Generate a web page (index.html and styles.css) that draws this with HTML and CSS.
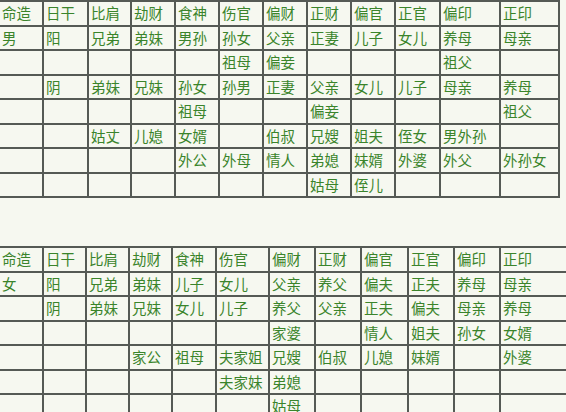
FILE: index.html
```html
<!DOCTYPE html>
<html lang="zh-CN">
<head>
<meta charset="utf-8">
<title>十神六亲</title>
<link rel="stylesheet" href="styles.css">
</head>
<body>
<table class="kin kin-male">
  <colgroup>
    <col class="c1"><col class="c2"><col class="c3"><col class="c4"><col class="c5"><col class="c6">
    <col class="c7"><col class="c8"><col class="c9"><col class="c10"><col class="c11"><col class="c12">
  </colgroup>
  <tr><td>命造</td><td>日干</td><td>比肩</td><td>劫财</td><td>食神</td><td>伤官</td><td>偏财</td><td>正财</td><td>偏官</td><td>正官</td><td>偏印</td><td>正印</td></tr>
  <tr><td>男</td><td>阳</td><td>兄弟</td><td>弟妹</td><td>男孙</td><td>孙女</td><td>父亲</td><td>正妻</td><td>儿子</td><td>女儿</td><td>养母</td><td>母亲</td></tr>
  <tr><td></td><td></td><td></td><td></td><td></td><td>祖母</td><td>偏妾</td><td></td><td></td><td></td><td>祖父</td><td></td></tr>
  <tr><td></td><td>阴</td><td>弟妹</td><td>兄妹</td><td>孙女</td><td>孙男</td><td>正妻</td><td>父亲</td><td>女儿</td><td>儿子</td><td>母亲</td><td>养母</td></tr>
  <tr><td></td><td></td><td></td><td></td><td>祖母</td><td></td><td></td><td>偏妾</td><td></td><td></td><td></td><td>祖父</td></tr>
  <tr><td></td><td></td><td>姑丈</td><td>儿媳</td><td>女婿</td><td></td><td>伯叔</td><td>兄嫂</td><td>姐夫</td><td>侄女</td><td>男外孙</td><td></td></tr>
  <tr><td></td><td></td><td></td><td></td><td>外公</td><td>外母</td><td>情人</td><td>弟媳</td><td>妹婿</td><td>外婆</td><td>外父</td><td>外孙女</td></tr>
  <tr><td></td><td></td><td></td><td></td><td></td><td></td><td></td><td>姑母</td><td>侄儿</td><td></td><td></td><td></td></tr>
</table>

<table class="kin kin-female">
  <colgroup>
    <col class="c1"><col class="c2"><col class="c3"><col class="c4"><col class="c5"><col class="c6">
    <col class="c7"><col class="c8"><col class="c9"><col class="c10"><col class="c11"><col class="c12">
  </colgroup>
  <tr><td>命造</td><td>日干</td><td>比肩</td><td>劫财</td><td>食神</td><td>伤官</td><td>偏财</td><td>正财</td><td>偏官</td><td>正官</td><td>偏印</td><td>正印</td></tr>
  <tr><td>女</td><td>阳</td><td>兄弟</td><td>弟妹</td><td>儿子</td><td>女儿</td><td>父亲</td><td>养父</td><td>偏夫</td><td>正夫</td><td>养母</td><td>母亲</td></tr>
  <tr><td></td><td>阴</td><td>弟妹</td><td>兄妹</td><td>女儿</td><td>儿子</td><td>养父</td><td>父亲</td><td>正夫</td><td>偏夫</td><td>母亲</td><td>养母</td></tr>
  <tr><td></td><td></td><td></td><td></td><td></td><td></td><td>家婆</td><td></td><td>情人</td><td>姐夫</td><td>孙女</td><td>女婿</td></tr>
  <tr><td></td><td></td><td></td><td>家公</td><td>祖母</td><td>夫家姐</td><td>兄嫂</td><td>伯叔</td><td>儿媳</td><td>妹婿</td><td></td><td>外婆</td></tr>
  <tr><td></td><td></td><td></td><td></td><td></td><td>夫家妹</td><td>弟媳</td><td></td><td></td><td></td><td></td><td></td></tr>
  <tr><td></td><td></td><td></td><td></td><td></td><td></td><td>姑母</td><td></td><td></td><td></td><td></td><td></td></tr>
</table>
</body>
</html>
```

FILE: styles.css
```css
html, body {
  margin: 0;
  padding: 0;
  overflow: hidden;
  background: #f6f8f0;
}

body {
  font-family: "Noto Sans CJK SC", "Noto Sans", sans-serif;
  font-size: 14.5px;
  color: #3a842b;
}

.kin {
  border-collapse: collapse;
  table-layout: fixed;
  margin-left: -2px;
}

.kin td {
  border: 2px solid #555a55;
  height: 22.5px;
  padding: 0 2px;
  line-height: 18px;
  white-space: nowrap;
  vertical-align: middle;
}

.kin-male {
  width: 560px;
  margin-top: 0;
}

.kin-female {
  width: 580px;
  margin-top: 48px;
}

.kin-male .c1 { width: 44px; }
.kin-male .c2 { width: 45px; }
.kin-male .c3 { width: 43px; }
.kin-male .c4,
.kin-male .c5,
.kin-male .c6,
.kin-male .c7,
.kin-male .c8,
.kin-male .c9 { width: 44px; }
.kin-male .c10 { width: 45px; }
.kin-male .c11 { width: 60px; }
.kin-male .c12 { width: 59px; }

.kin-female .c1 { width: 44px; }
.kin-female .c2,
.kin-female .c3,
.kin-female .c4 { width: 43px; }
.kin-female .c5 { width: 44px; }
.kin-female .c6 { width: 53px; }
.kin-female .c7,
.kin-female .c8 { width: 46px; }
.kin-female .c9 { width: 47px; }
.kin-female .c10,
.kin-female .c11 { width: 46px; }
.kin-female .c12 { width: 79px; }
```
